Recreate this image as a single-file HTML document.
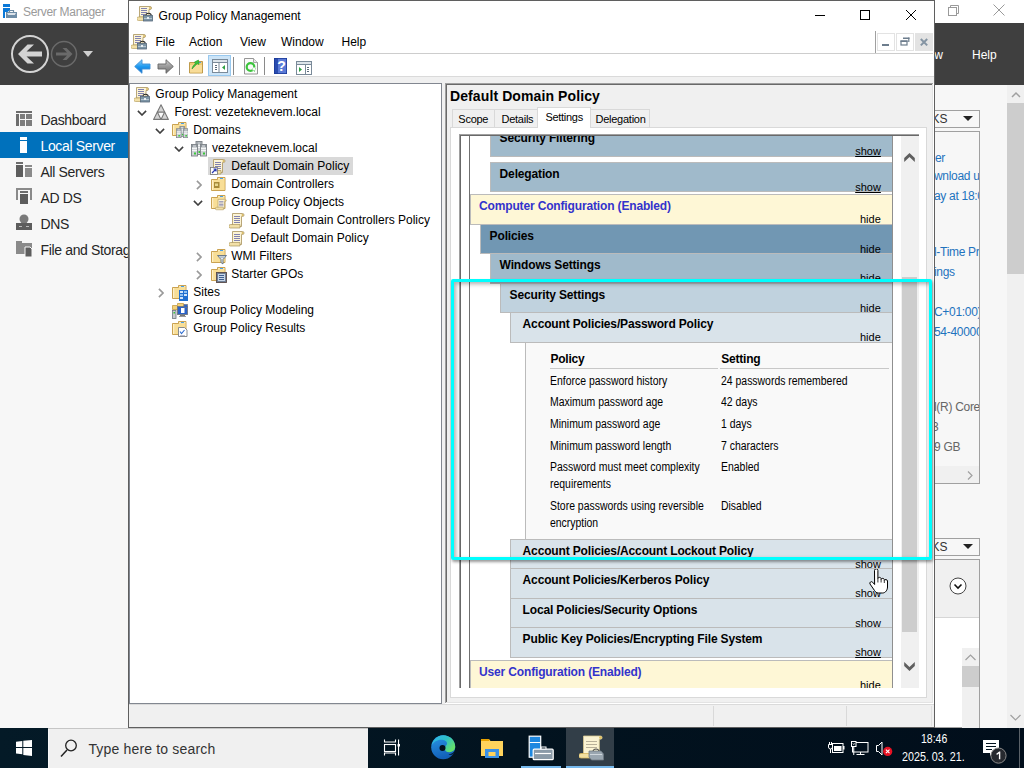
<!DOCTYPE html><html><head><meta charset="utf-8"><style>html,body{margin:0;padding:0;width:1024px;height:768px;overflow:hidden;position:relative;font-family:"Liberation Sans", sans-serif;background:#fff}div,svg{position:absolute}</style></head><body><div style="position:absolute;left:0px;top:0px;width:1024px;height:23px;background:#ffffff;"></div><svg style="position:absolute;left:0px;top:0px;" width="20" height="20" viewBox="0 0 20 20"><rect x="3" y="4" width="7" height="3" fill="#0a78d7"/><path d="M3 8 h7 v2 l-2.5 2 h-2.5 v6 h-2 Z" fill="#0a78d7"/><rect x="6" y="12" width="11" height="6" fill="#6f8da6"/><path d="M9.5 12 v-1.5 h4 v1.5" fill="none" stroke="#6f8da6" stroke-width="1.2"/><path d="M7 13.2 h9 l-1.2 1.6 h-6.6 Z" fill="#fff"/></svg><div style="position:absolute;left:23px;top:6.00px;font-size:12px;line-height:12px;color:#9a9a9a;font-weight:normal;white-space:nowrap;letter-spacing:-0.3px;">Server Manager</div><svg style="position:absolute;left:946px;top:3px;" width="14" height="14" viewBox="0 0 14 14"><rect x="2.5" y="4.5" width="8" height="8" fill="none" stroke="#9a9a9a"/><path d="M4.5 4.5 v-2 h8 v8 h-2" fill="none" stroke="#9a9a9a"/></svg><svg style="position:absolute;left:993px;top:4px;" width="12" height="12" viewBox="0 0 12 12"><path d="M0.5 0.5 L11.5 11.5 M11.5 0.5 L0.5 11.5" stroke="#9a9a9a" stroke-width="1"/></svg><div style="position:absolute;left:0px;top:23px;width:1024px;height:62px;background:#3f3f3f;"></div><svg style="position:absolute;left:10px;top:34px;" width="40" height="40" viewBox="0 0 40 40"><circle cx="20" cy="20" r="18" fill="none" stroke="#d4d4d4" stroke-width="2"/><path d="M8 20 L17.5 10.5 h6.5 L16.5 17.5 H32 v5 H16.5 L24 29.5 h-6.5 Z" fill="#d4d4d4"/></svg><svg style="position:absolute;left:50px;top:40px;" width="28" height="28" viewBox="0 0 28 28"><circle cx="14" cy="14" r="12.5" fill="none" stroke="#6a6a6a" stroke-width="1.5"/><path d="M22.5 14 L16.5 8 h-4 L17 12.5 H6 v3 H17 L12.5 20 h4 Z" fill="#6a6a6a"/></svg><svg style="position:absolute;left:83px;top:51px;" width="11" height="7" viewBox="0 0 11 7"><path d="M0 0 h10 l-5 6 Z" fill="#cfcfcf"/></svg><div style="position:absolute;left:917px;top:49.00px;font-size:12px;line-height:12px;color:#ffffff;font-weight:normal;white-space:nowrap;">View</div><div style="position:absolute;left:972px;top:49.00px;font-size:12px;line-height:12px;color:#ffffff;font-weight:normal;white-space:nowrap;">Help</div><div style="position:absolute;left:0px;top:85px;width:1024px;height:643px;background:#f7f7f7;"></div><div style="position:absolute;left:0px;top:132px;width:128px;height:26px;background:#0071bc;"></div><div style="position:absolute;left:40.5px;top:113.00px;font-size:14px;line-height:14px;color:#262626;font-weight:normal;white-space:nowrap;letter-spacing:-0.35px;">Dashboard</div><div style="position:absolute;left:40.5px;top:139.00px;font-size:14px;line-height:14px;color:#ffffff;font-weight:normal;white-space:nowrap;letter-spacing:-0.35px;">Local Server</div><div style="position:absolute;left:40.5px;top:165.00px;font-size:14px;line-height:14px;color:#262626;font-weight:normal;white-space:nowrap;letter-spacing:-0.35px;">All Servers</div><div style="position:absolute;left:40.5px;top:191.00px;font-size:14px;line-height:14px;color:#262626;font-weight:normal;white-space:nowrap;letter-spacing:-0.35px;">AD DS</div><div style="position:absolute;left:40.5px;top:217.00px;font-size:14px;line-height:14px;color:#262626;font-weight:normal;white-space:nowrap;letter-spacing:-0.35px;">DNS</div><div style="position:absolute;left:40.5px;top:243.00px;font-size:14px;line-height:14px;color:#262626;font-weight:normal;white-space:nowrap;letter-spacing:-0.35px;">File and Storage Services</div><svg style="position:absolute;left:16px;top:111px;" width="16" height="16" viewBox="0 0 16 16"><rect x="0" y="0" width="16" height="2" fill="#6d6d6d"/><rect x="0" y="3" width="3" height="12" fill="#6d6d6d"/><rect x="4" y="3" width="5" height="5" fill="#7d7d7d"/><rect x="10" y="3" width="6" height="5" fill="#7d7d7d"/><rect x="4" y="9" width="5" height="6" fill="#7d7d7d"/><rect x="10" y="9" width="6" height="6" fill="#7d7d7d"/></svg><svg style="position:absolute;left:20px;top:137px;" width="8" height="17" viewBox="0 0 8 17"><rect x="0" y="0" width="7" height="3" fill="#fff"/><rect x="0" y="4" width="7" height="12" fill="#fff"/></svg><svg style="position:absolute;left:16px;top:162px;" width="16" height="16" viewBox="0 0 16 16"><rect x="0" y="0" width="7" height="2" fill="#6d6d6d"/><rect x="0" y="3" width="7" height="12" fill="#5d5d5d"/><rect x="9" y="3" width="7" height="2" fill="#8a8a8a"/><rect x="9" y="6" width="7" height="9" fill="#8a8a8a"/></svg><svg style="position:absolute;left:16px;top:188px;" width="16" height="17" viewBox="0 0 16 17"><rect x="0" y="0" width="2" height="12" fill="#8a8a8a"/><rect x="14" y="0" width="2" height="12" fill="#8a8a8a"/><rect x="0" y="0" width="16" height="2" fill="#8a8a8a"/><rect x="4" y="3" width="8" height="2" fill="#6d6d6d"/><rect x="4" y="6" width="8" height="10" fill="#5d5d5d"/></svg><svg style="position:absolute;left:16px;top:214px;" width="16" height="16" viewBox="0 0 16 16"><circle cx="8" cy="5" r="4.5" fill="#7a7a7a"/><rect x="0" y="9" width="16" height="7" fill="#5d5d5d"/><rect x="3" y="12" width="3" height="1" fill="#bbb"/><rect x="10" y="12" width="3" height="1" fill="#bbb"/></svg><svg style="position:absolute;left:16px;top:241px;" width="16" height="16" viewBox="0 0 16 16"><rect x="0" y="0" width="6" height="2" fill="#8a8a8a"/><rect x="0" y="2" width="16" height="11" fill="#8a8a8a"/><path d="M9 6 h5 l2 2 v8 h-7 Z" fill="#5d5d5d" stroke="#f7f7f7" stroke-width="1"/></svg><div style="position:absolute;left:1007px;top:85px;width:17px;height:643px;background:#f0f0f0;"></div><svg style="position:absolute;left:1011px;top:91px;" width="10" height="7" viewBox="0 0 10 7"><path d="M1 6 L5 2 L9 6" fill="none" stroke="#a0a0a0" stroke-width="1.5"/></svg><div style="position:absolute;left:1007px;top:103px;width:17px;height:171px;background:#cdcdcd;"></div><svg style="position:absolute;left:1010px;top:714px;" width="11" height="7" viewBox="0 0 11 7"><path d="M0.5 1 L5.5 6 L10.5 1" fill="none" stroke="#a0a0a0" stroke-width="1.2"/></svg><div style="position:absolute;left:900px;top:110px;width:80px;height:18px;box-sizing:border-box;background:#f7f7f7;border:1px solid #a0a0a0"></div><div style="position:absolute;right:76.5px;top:113.00px;font-size:12px;line-height:12px;color:#333;font-weight:normal;white-space:nowrap;">TASKS</div><svg style="position:absolute;left:963px;top:116px;" width="11" height="6" viewBox="0 0 11 6"><path d="M0 0 h10 l-5 5 Z" fill="#222"/></svg><div style="position:absolute;left:900px;top:131px;width:80px;height:353px;box-sizing:border-box;background:#f7f7f7;border:1px solid #a0a0a0"></div><div style="position:absolute;left:934px;top:131px;width:45px;height:335px;overflow:hidden"><div style="position:absolute;left:1px;top:21px;font-size:12px;line-height:12px;color:#1e73be;white-space:nowrap;letter-spacing:-0.3px">er</div><div style="position:absolute;left:0px;top:39px;font-size:12px;line-height:12px;color:#1e73be;white-space:nowrap;letter-spacing:-0.3px">wnload updates</div><div style="position:absolute;left:0px;top:59px;font-size:12px;line-height:12px;color:#1e73be;white-space:nowrap;letter-spacing:-0.3px">ay at 18:05</div><div style="position:absolute;left:0px;top:115px;font-size:12px;line-height:12px;color:#1e73be;white-space:nowrap;letter-spacing:-0.3px">l-Time Protection</div><div style="position:absolute;left:0px;top:135px;font-size:12px;line-height:12px;color:#1e73be;white-space:nowrap;letter-spacing:-0.3px">ings</div><div style="position:absolute;left:0px;top:175px;font-size:12px;line-height:12px;color:#1e73be;white-space:nowrap;letter-spacing:-0.3px">C+01:00) Budapest</div><div style="position:absolute;left:0px;top:195px;font-size:12px;line-height:12px;color:#1e73be;white-space:nowrap;letter-spacing:-0.3px">54-40000-00000</div><div style="position:absolute;left:0px;top:270px;font-size:12px;line-height:12px;color:#666;white-space:nowrap;letter-spacing:-0.3px">l(R) Core(TM)</div><div style="position:absolute;left:-2px;top:290px;font-size:12px;line-height:12px;color:#666;white-space:nowrap;letter-spacing:-0.3px">3</div><div style="position:absolute;left:0px;top:310px;font-size:12px;line-height:12px;color:#666;white-space:nowrap;letter-spacing:-0.3px">9 GB</div></div><div style="position:absolute;left:900px;top:466px;width:80px;height:18px;box-sizing:border-box;background:#f0f0f0;border-left:0;border-right:1px solid #a0a0a0;border-bottom:1px solid #a0a0a0"></div><svg style="position:absolute;left:967px;top:471px;" width="6" height="9" viewBox="0 0 6 9"><path d="M1 0.5 L5 4.5 L1 8.5" fill="none" stroke="#a0a0a0" stroke-width="1.2"/></svg><div style="position:absolute;left:900px;top:538px;width:80px;height:18px;box-sizing:border-box;background:#f7f7f7;border:1px solid #a0a0a0"></div><div style="position:absolute;right:76.5px;top:541.00px;font-size:12px;line-height:12px;color:#333;font-weight:normal;white-space:nowrap;">TASKS</div><svg style="position:absolute;left:963px;top:544px;" width="11" height="6" viewBox="0 0 11 6"><path d="M0 0 h10 l-5 5 Z" fill="#222"/></svg><div style="position:absolute;left:900px;top:559px;width:80px;height:169px;box-sizing:border-box;background:#fff;border:1px solid #a0a0a0"></div><div style="position:absolute;left:901px;top:560px;width:78px;height:57px;background:#f0f0f0;"></div><div style="position:absolute;left:901px;top:617px;width:78px;height:1px;background:#d6d6d6;"></div><svg style="position:absolute;left:949px;top:577px;" width="18" height="18" viewBox="0 0 18 18"><circle cx="9" cy="9" r="8" fill="#fff" stroke="#444" stroke-width="1"/><path d="M5.5 7.5 L9 11 L12.5 7.5" fill="none" stroke="#111" stroke-width="1.6"/></svg><div style="position:absolute;left:962px;top:648px;width:17px;height:80px;background:#f0f0f0;"></div><svg style="position:absolute;left:965px;top:654px;" width="11" height="7" viewBox="0 0 11 7"><path d="M0.5 6 L5.5 1 L10.5 6" fill="none" stroke="#a0a0a0" stroke-width="1.2"/></svg><div style="position:absolute;left:962px;top:666px;width:17px;height:21px;background:#cdcdcd;"></div><div style="position:absolute;left:128px;top:0px;width:807px;height:728px;box-sizing:border-box;background:#fff;border:1px solid #5f5f5f"></div><svg style="position:absolute;left:137px;top:6px;" width="16" height="16" viewBox="0 0 16 16"><path d="M2.5 0.5 h10.5 a1.5 1.5 0 0 1 0 3 h-1 v7.5 h-9.5 Z" fill="#fcf4d6" stroke="#a8925a" stroke-width="0.8"/><circle cx="13" cy="2" r="1" fill="#d8b860"/><rect x="4" y="2" width="6" height="1" fill="#8282b0"/><rect x="4" y="4" width="6" height="1" fill="#8282b0"/><rect x="4" y="6" width="6" height="1" fill="#8282b0"/><rect x="4" y="8" width="4" height="1" fill="#8282b0"/><path d="M1.5 11 h7 v3.5 h-7 a1.75 1.75 0 0 1 0 -3.5Z" fill="#f2e0a8" stroke="#b8a060" stroke-width="0.7"/><path d="M8.8 9.5 a2.7 2.2 0 0 1 5.4 0" fill="none" stroke="#2a2a2a" stroke-width="1.1"/><rect x="6.5" y="9.5" width="9" height="5.5" fill="#7d95a6" stroke="#55687a" stroke-width="0.8"/><rect x="7" y="12" width="8" height="1" fill="#b4c4d0"/><rect x="10" y="11" width="2" height="2" fill="#e8eef2"/></svg><div style="position:absolute;left:158.6px;top:10.00px;font-size:12px;line-height:12px;color:#000;font-weight:normal;white-space:nowrap;">Group Policy Management</div><div style="position:absolute;left:815px;top:15px;width:10px;height:1px;background:#000;"></div><div style="position:absolute;left:860px;top:10px;width:10px;height:10px;box-sizing:border-box;border:1px solid #000"></div><svg style="position:absolute;left:905px;top:9px;" width="12" height="12" viewBox="0 0 12 12"><path d="M1 1 L11 11 M11 1 L1 11" stroke="#000" stroke-width="1"/></svg><svg style="position:absolute;left:131px;top:34px;" width="16" height="16" viewBox="0 0 16 16"><path d="M2.5 0.5 h10.5 a1.5 1.5 0 0 1 0 3 h-1 v7.5 h-9.5 Z" fill="#fcf4d6" stroke="#a8925a" stroke-width="0.8"/><circle cx="13" cy="2" r="1" fill="#d8b860"/><rect x="4" y="2" width="6" height="1" fill="#8282b0"/><rect x="4" y="4" width="6" height="1" fill="#8282b0"/><rect x="4" y="6" width="6" height="1" fill="#8282b0"/><rect x="4" y="8" width="4" height="1" fill="#8282b0"/><path d="M1.5 11 h7 v3.5 h-7 a1.75 1.75 0 0 1 0 -3.5Z" fill="#f2e0a8" stroke="#b8a060" stroke-width="0.7"/><path d="M8.8 9.5 a2.7 2.2 0 0 1 5.4 0" fill="none" stroke="#2a2a2a" stroke-width="1.1"/><rect x="6.5" y="9.5" width="9" height="5.5" fill="#7d95a6" stroke="#55687a" stroke-width="0.8"/><rect x="7" y="12" width="8" height="1" fill="#b4c4d0"/><rect x="10" y="11" width="2" height="2" fill="#e8eef2"/></svg><div style="position:absolute;left:155.5px;top:36.00px;font-size:12px;line-height:12px;color:#000;font-weight:normal;white-space:nowrap;">File</div><div style="position:absolute;left:189px;top:36.00px;font-size:12px;line-height:12px;color:#000;font-weight:normal;white-space:nowrap;">Action</div><div style="position:absolute;left:240px;top:36.00px;font-size:12px;line-height:12px;color:#000;font-weight:normal;white-space:nowrap;">View</div><div style="position:absolute;left:281px;top:36.00px;font-size:12px;line-height:12px;color:#000;font-weight:normal;white-space:nowrap;">Window</div><div style="position:absolute;left:341.5px;top:36.00px;font-size:12px;line-height:12px;color:#000;font-weight:normal;white-space:nowrap;">Help</div><div style="position:absolute;left:875px;top:31px;width:1px;height:22px;background:#a0a0a0;"></div><div style="position:absolute;left:877px;top:33px;width:18px;height:18px;box-sizing:border-box;border:1px solid #e3e3e3;background:#fff"></div><div style="position:absolute;left:882px;top:44px;width:7px;height:2px;background:#6d7d8d;"></div><div style="position:absolute;left:896px;top:33px;width:18px;height:18px;box-sizing:border-box;border:1px solid #e3e3e3;background:#fff"></div><svg style="position:absolute;left:900px;top:37px;" width="10" height="9" viewBox="0 0 10 9"><rect x="1" y="4" width="6" height="4" fill="none" stroke="#6d7d8d" stroke-width="1.2"/><rect x="0.5" y="3.5" width="7" height="1.5" fill="#6d7d8d"/><rect x="3" y="0.5" width="6.5" height="1.5" fill="#6d7d8d"/><rect x="8.2" y="0.5" width="1.2" height="4.5" fill="#6d7d8d"/></svg><div style="position:absolute;left:915px;top:33px;width:18px;height:18px;background:#e3e3e3;"></div><svg style="position:absolute;left:919px;top:37px;" width="10" height="10" viewBox="0 0 10 10"><path d="M1.8 2 L8.2 8.4 M8.2 2 L1.8 8.4" stroke="#8494a3" stroke-width="2"/></svg><div style="position:absolute;left:129px;top:53px;width:804px;height:1px;background:#cdcdcd;"></div><svg style="position:absolute;left:134px;top:59px;" width="17" height="15" viewBox="0 0 17 15"><defs><linearGradient id="bk" x1="0" y1="0" x2="0" y2="1"><stop offset="0" stop-color="#8fd0fa"/><stop offset="0.5" stop-color="#1e9af0"/><stop offset="1" stop-color="#0a66c8"/></linearGradient></defs><path d="M0.7 7.5 L8 0.7 v4.3 h8 v5 h-8 v4.3 Z" fill="url(#bk)" stroke="#3c8fd6" stroke-width="0.9" stroke-linejoin="round"/></svg><svg style="position:absolute;left:157px;top:59px;" width="17" height="15" viewBox="0 0 17 15"><defs><linearGradient id="fw" x1="0" y1="0" x2="0" y2="1"><stop offset="0" stop-color="#d0d0d0"/><stop offset="0.5" stop-color="#9a9a9a"/><stop offset="1" stop-color="#6e6e6e"/></linearGradient></defs><path d="M16.3 7.5 L9 0.7 v4.3 h-8 v5 h8 v4.3 Z" fill="url(#fw)" stroke="#646464" stroke-width="0.9" stroke-linejoin="round"/></svg><div style="position:absolute;left:179px;top:57px;width:1px;height:18px;background:#8a8a8a;"></div><svg style="position:absolute;left:188px;top:58px;" width="16" height="17" viewBox="0 0 16 17"><path d="M1.5 4.5 h6 l1 -1 h6 v11.5 h-13 Z" fill="#f0cd78" stroke="#b8923e" stroke-width="0.9"/><rect x="2" y="7" width="12" height="7.5" fill="#f8dc98"/><rect x="10" y="4" width="3" height="1" fill="#4aa0e8"/><path d="M4 11 C4.5 8 6 6.5 7.5 6 L6.5 4 L10.5 2 L11 6.5 L9.5 5.8 C8 6.5 6.5 8.5 4 11 Z" fill="#3cc43c" stroke="#2a9a2a" stroke-width="0.6"/></svg><div style="position:absolute;left:208px;top:55px;width:23px;height:21px;box-sizing:border-box;background:#cce4f7;border:1px solid #99c9ef"></div><svg style="position:absolute;left:212px;top:59px;" width="16" height="14" viewBox="0 0 16 14"><rect x="0.5" y="0.5" width="15" height="13" fill="#fff" stroke="#7a8a99"/><rect x="0.5" y="0.5" width="15" height="3" fill="#dde4ea" stroke="#7a8a99"/><rect x="3" y="6" width="2" height="1" fill="#5a6a7a"/><rect x="3" y="8" width="2" height="1" fill="#5a6a7a"/><rect x="3" y="10" width="2" height="1" fill="#5a6a7a"/><rect x="6.5" y="4" width="1" height="9" fill="#7a8a99"/><path d="M13 6 L10 8.5 L13 11 Z" fill="#2ea043"/></svg><div style="position:absolute;left:233px;top:57px;width:1px;height:18px;background:#8a8a8a;"></div><svg style="position:absolute;left:244px;top:58px;" width="14" height="17" viewBox="0 0 14 17"><path d="M0.5 0.5 h9 l4 4 v11.5 h-13 Z" fill="#fafafa" stroke="#8a8a8a" stroke-width="0.9"/><path d="M9.5 0.5 v4 h4" fill="#e8e8e8" stroke="#8a8a8a" stroke-width="0.7"/><circle cx="6.5" cy="9" r="3.8" fill="none" stroke="#3cc43c" stroke-width="2.2"/><path d="M8 10.5 L12 10 L10.5 14 Z" fill="#3cc43c"/><rect x="8.5" y="9.5" width="3" height="3" fill="#fafafa"/></svg><div style="position:absolute;left:264px;top:57px;width:1px;height:18px;background:#8a8a8a;"></div><svg style="position:absolute;left:274px;top:58px;" width="13" height="16" viewBox="0 0 13 16"><rect x="0" y="0" width="13" height="16" fill="#1b3a98"/><rect x="4" y="0.8" width="8.2" height="14.4" fill="#5a7ad6"/><rect x="0.8" y="0.8" width="3.2" height="14.4" fill="#2a4cb0"/><text x="7.5" y="13" font-size="14" font-family="Liberation Sans" font-weight="bold" fill="#fff" text-anchor="middle">?</text></svg><svg style="position:absolute;left:296px;top:61px;" width="16" height="14" viewBox="0 0 16 14"><rect x="0.5" y="0.5" width="15" height="13" fill="#fff" stroke="#7a8a99"/><rect x="0.5" y="0.5" width="15" height="3" fill="#dde4ea" stroke="#7a8a99"/><rect x="11" y="6" width="2" height="1" fill="#5a6a7a"/><rect x="11" y="8" width="2" height="1" fill="#5a6a7a"/><rect x="11" y="10" width="2" height="1" fill="#5a6a7a"/><rect x="9" y="4" width="1" height="9" fill="#7a8a99"/><path d="M3 6 L6 8.5 L3 11 Z" fill="#2ea043"/></svg><div style="position:absolute;left:129px;top:76px;width:805px;height:1px;background:#dadada;"></div><div style="position:absolute;left:129px;top:77px;width:805px;height:650px;background:#f0f0f0;"></div><div style="position:absolute;left:129px;top:83px;width:313px;height:621px;box-sizing:border-box;background:#fff;border:1px solid #828790"></div><div style="position:absolute;left:445px;top:83px;width:489px;height:621px;background:#ffffff;"></div><div style="position:absolute;left:445px;top:83px;width:488px;height:620px;background:#a0a0a0;"></div><div style="position:absolute;left:446px;top:84px;width:487px;height:619px;background:#e3e3e3;"></div><div style="position:absolute;left:446px;top:84px;width:486px;height:618px;background:#696969;"></div><div style="position:absolute;left:447px;top:85px;width:485px;height:617px;background:#f0f0f0;"></div><div style="position:absolute;left:129px;top:704px;width:805px;height:1px;background:#dadada;"></div><div style="position:absolute;left:713px;top:706px;width:1px;height:20px;background:#d9d9d9;"></div><div style="position:absolute;left:846px;top:706px;width:1px;height:20px;background:#d9d9d9;"></div><div style="position:absolute;left:931px;top:706px;width:1px;height:20px;background:#e0e0e0;"></div><div style="position:absolute;left:208px;top:157px;width:145px;height:18px;background:#d9d9d9;"></div><svg style="position:absolute;left:134px;top:87px;" width="16" height="16" viewBox="0 0 16 16"><path d="M2.5 0.5 h10.5 a1.5 1.5 0 0 1 0 3 h-1 v7.5 h-9.5 Z" fill="#fcf4d6" stroke="#a8925a" stroke-width="0.8"/><circle cx="13" cy="2" r="1" fill="#d8b860"/><rect x="4" y="2" width="6" height="1" fill="#8282b0"/><rect x="4" y="4" width="6" height="1" fill="#8282b0"/><rect x="4" y="6" width="6" height="1" fill="#8282b0"/><rect x="4" y="8" width="4" height="1" fill="#8282b0"/><path d="M1.5 11 h7 v3.5 h-7 a1.75 1.75 0 0 1 0 -3.5Z" fill="#f2e0a8" stroke="#b8a060" stroke-width="0.7"/><path d="M8.8 9.5 a2.7 2.2 0 0 1 5.4 0" fill="none" stroke="#2a2a2a" stroke-width="1.1"/><rect x="6.5" y="9.5" width="9" height="5.5" fill="#7d95a6" stroke="#55687a" stroke-width="0.8"/><rect x="7" y="12" width="8" height="1" fill="#b4c4d0"/><rect x="10" y="11" width="2" height="2" fill="#e8eef2"/></svg><div style="position:absolute;left:155.3px;top:88.00px;font-size:12px;line-height:12px;color:#000;font-weight:normal;white-space:nowrap;">Group Policy Management</div><svg style="position:absolute;left:136.5px;top:110px;" width="10" height="6" viewBox="0 0 10 6"><path d="M0.9 0.9 L5 5 L9.1 0.9" fill="none" stroke="#404040" stroke-width="1.6"/></svg><svg style="position:absolute;left:153px;top:104px;" width="16" height="16" viewBox="0 0 16 16"><path d="M8 0.8 L15.4 15.4 H0.6 Z" fill="#d4d4d4" stroke="#777" stroke-width="1.1" stroke-linejoin="round"/><path d="M4.3 8.1 H11.7 L8 15.4 Z" fill="#fafafa" stroke="#777" stroke-width="1.1" stroke-linejoin="round"/></svg><div style="position:absolute;left:174.5px;top:106.00px;font-size:12px;line-height:12px;color:#000;font-weight:normal;white-space:nowrap;">Forest: vezeteknevem.local</div><svg style="position:absolute;left:155px;top:128px;" width="10" height="6" viewBox="0 0 10 6"><path d="M0.9 0.9 L5 5 L9.1 0.9" fill="none" stroke="#404040" stroke-width="1.6"/></svg><svg style="position:absolute;left:172px;top:122px;" width="16" height="16" viewBox="0 0 16 16"><path d="M0.5 2.5 h6 v-2 h7.5 v13 h-13.5 Z" fill="#f3d17a" stroke="#c49a45" stroke-width="0.9"/><rect x="7" y="1" width="6.5" height="1.6" fill="#fbeab8"/><rect x="9" y="1" width="3" height="1" fill="#4aa0e8"/><rect x="1" y="3" width="12.5" height="10" fill="#f8de96"/><rect x="1" y="3" width="1.2" height="10" fill="#fff0c8"/><g transform="translate(4,4) scale(0.78)"><rect x="5.0" y="0.5" width="6" height="13" fill="#cfd3d6" stroke="#7a8086" stroke-width="0.9"/><rect x="5.5" y="1" width="5" height="2" fill="#8e959b"/><rect x="6.5" y="1.5" width="3" height="1" fill="#e8ecef"/><rect x="5.5" y="4" width="5" height="1" fill="#f4f6f7"/><rect x="5.5" y="6" width="5" height="1" fill="#f4f6f7"/><rect x="7.5" y="10" width="2" height="2" fill="#38c838"/><rect x="0.5" y="3.5" width="6" height="11.5" fill="#cfd3d6" stroke="#7a8086" stroke-width="0.9"/><rect x="1" y="4" width="5" height="2" fill="#8e959b"/><rect x="2" y="4.5" width="3" height="1" fill="#e8ecef"/><rect x="1" y="7" width="5" height="1" fill="#f4f6f7"/><rect x="1" y="9" width="5" height="1" fill="#f4f6f7"/><rect x="3" y="11.5" width="2" height="2" fill="#38c838"/><rect x="9.5" y="3.5" width="6" height="11.5" fill="#cfd3d6" stroke="#7a8086" stroke-width="0.9"/><rect x="10" y="4" width="5" height="2" fill="#8e959b"/><rect x="11" y="4.5" width="3" height="1" fill="#e8ecef"/><rect x="10" y="7" width="5" height="1" fill="#f4f6f7"/><rect x="10" y="9" width="5" height="1" fill="#f4f6f7"/><rect x="12" y="11.5" width="2" height="2" fill="#38c838"/></g></svg><div style="position:absolute;left:193.3px;top:124.00px;font-size:12px;line-height:12px;color:#000;font-weight:normal;white-space:nowrap;">Domains</div><svg style="position:absolute;left:174px;top:146px;" width="10" height="6" viewBox="0 0 10 6"><path d="M0.9 0.9 L5 5 L9.1 0.9" fill="none" stroke="#404040" stroke-width="1.6"/></svg><svg style="position:absolute;left:191px;top:141px;" width="16" height="16" viewBox="0 0 16 16"><rect x="5.0" y="0.5" width="6" height="13" fill="#cfd3d6" stroke="#7a8086" stroke-width="0.9"/><rect x="5.5" y="1" width="5" height="2" fill="#8e959b"/><rect x="6.5" y="1.5" width="3" height="1" fill="#e8ecef"/><rect x="5.5" y="4" width="5" height="1" fill="#f4f6f7"/><rect x="5.5" y="6" width="5" height="1" fill="#f4f6f7"/><rect x="7.5" y="10" width="2" height="2" fill="#38c838"/><rect x="0.5" y="3.5" width="6" height="11.5" fill="#cfd3d6" stroke="#7a8086" stroke-width="0.9"/><rect x="1" y="4" width="5" height="2" fill="#8e959b"/><rect x="2" y="4.5" width="3" height="1" fill="#e8ecef"/><rect x="1" y="7" width="5" height="1" fill="#f4f6f7"/><rect x="1" y="9" width="5" height="1" fill="#f4f6f7"/><rect x="3" y="11.5" width="2" height="2" fill="#38c838"/><rect x="9.5" y="3.5" width="6" height="11.5" fill="#cfd3d6" stroke="#7a8086" stroke-width="0.9"/><rect x="10" y="4" width="5" height="2" fill="#8e959b"/><rect x="11" y="4.5" width="3" height="1" fill="#e8ecef"/><rect x="10" y="7" width="5" height="1" fill="#f4f6f7"/><rect x="10" y="9" width="5" height="1" fill="#f4f6f7"/><rect x="12" y="11.5" width="2" height="2" fill="#38c838"/></svg><div style="position:absolute;left:212px;top:142.00px;font-size:12px;line-height:12px;color:#000;font-weight:normal;white-space:nowrap;">vezeteknevem.local</div><svg style="position:absolute;left:210px;top:159px;" width="16" height="16" viewBox="0 0 16 16"><path d="M3.5 0.5 h10 a1.5 1.5 0 0 1 0 3 h-1 v10 h-9 Z" fill="#fcf4d6" stroke="#a8925a" stroke-width="0.8"/><circle cx="13.5" cy="2" r="1" fill="#d8b860"/><rect x="5" y="3" width="6" height="1" fill="#8282b0"/><rect x="5" y="5" width="6" height="1" fill="#8282b0"/><rect x="5" y="7" width="6" height="1" fill="#8282b0"/><rect x="5" y="9" width="6" height="1" fill="#8282b0"/><path d="M1.5 11.5 h9.5 v3.5 h-9.5 a1.75 1.75 0 0 1 0 -3.5Z" fill="#f2e0a8" stroke="#a8925a" stroke-width="0.7"/><rect x="0.5" y="8.5" width="7" height="7" fill="#fff" stroke="#777" stroke-width="0.8"/><path d="M2 14 L6 10 M3.5 10 h2.5 v2.5" stroke="#2a3ab0" stroke-width="1.2" fill="none"/></svg><div style="position:absolute;left:231.3px;top:160.00px;font-size:12px;line-height:12px;color:#000;font-weight:normal;white-space:nowrap;">Default Domain Policy</div><svg style="position:absolute;left:195.5px;top:180px;" width="6" height="10" viewBox="0 0 6 10"><path d="M0.9 0.9 L5 5 L0.9 9.1" fill="none" stroke="#9a9a9a" stroke-width="1.6"/></svg><svg style="position:absolute;left:211px;top:177px;" width="16" height="16" viewBox="0 0 16 16"><path d="M0.5 2.5 h6 v-2 h7.5 v13 h-13.5 Z" fill="#f3d17a" stroke="#c49a45" stroke-width="0.9"/><rect x="7" y="1" width="6.5" height="1.6" fill="#fbeab8"/><rect x="9" y="1" width="3" height="1" fill="#4aa0e8"/><rect x="1" y="3" width="12.5" height="10" fill="#f8de96"/><rect x="1" y="3" width="1.2" height="10" fill="#fff0c8"/><rect x="3" y="5" width="5.5" height="6" fill="#a88a3a"/><rect x="4" y="6.5" width="3" height="2.5" fill="#e8d890"/></svg><div style="position:absolute;left:231.3px;top:178.00px;font-size:12px;line-height:12px;color:#000;font-weight:normal;white-space:nowrap;">Domain Controllers</div><svg style="position:absolute;left:193px;top:200px;" width="10" height="6" viewBox="0 0 10 6"><path d="M0.9 0.9 L5 5 L9.1 0.9" fill="none" stroke="#404040" stroke-width="1.6"/></svg><svg style="position:absolute;left:211px;top:195px;" width="16" height="16" viewBox="0 0 16 16"><path d="M0.5 2.5 h6 v-2 h7.5 v13 h-13.5 Z" fill="#f3d17a" stroke="#c49a45" stroke-width="0.9"/><rect x="7" y="1" width="6.5" height="1.6" fill="#fbeab8"/><rect x="9" y="1" width="3" height="1" fill="#4aa0e8"/><rect x="1" y="3" width="12.5" height="10" fill="#f8de96"/><rect x="1" y="3" width="1.2" height="10" fill="#fff0c8"/><g transform="translate(4.5,4) scale(0.72)"><path d="M3.5 0.5 h10 a1.5 1.5 0 0 1 0 3 h-1 v10 h-9 Z" fill="#fcf4d6" stroke="#a8925a" stroke-width="0.8"/><circle cx="13.5" cy="2" r="1" fill="#d8b860"/><rect x="5" y="3" width="6" height="1" fill="#8282b0"/><rect x="5" y="5" width="6" height="1" fill="#8282b0"/><rect x="5" y="7" width="6" height="1" fill="#8282b0"/><rect x="5" y="9" width="6" height="1" fill="#8282b0"/><path d="M1.5 11.5 h9.5 v3.5 h-9.5 a1.75 1.75 0 0 1 0 -3.5Z" fill="#f2e0a8" stroke="#a8925a" stroke-width="0.7"/></g></svg><div style="position:absolute;left:231.3px;top:196.00px;font-size:12px;line-height:12px;color:#000;font-weight:normal;white-space:nowrap;">Group Policy Objects</div><svg style="position:absolute;left:229px;top:213px;" width="16" height="16" viewBox="0 0 16 16"><path d="M3.5 0.5 h10 a1.5 1.5 0 0 1 0 3 h-1 v10 h-9 Z" fill="#fcf4d6" stroke="#a8925a" stroke-width="0.8"/><circle cx="13.5" cy="2" r="1" fill="#d8b860"/><rect x="5" y="3" width="6" height="1" fill="#8282b0"/><rect x="5" y="5" width="6" height="1" fill="#8282b0"/><rect x="5" y="7" width="6" height="1" fill="#8282b0"/><rect x="5" y="9" width="6" height="1" fill="#8282b0"/><path d="M1.5 11.5 h9.5 v3.5 h-9.5 a1.75 1.75 0 0 1 0 -3.5Z" fill="#f2e0a8" stroke="#a8925a" stroke-width="0.7"/></svg><div style="position:absolute;left:250.6px;top:214.00px;font-size:12px;line-height:12px;color:#000;font-weight:normal;white-space:nowrap;">Default Domain Controllers Policy</div><svg style="position:absolute;left:229px;top:231px;" width="16" height="16" viewBox="0 0 16 16"><path d="M3.5 0.5 h10 a1.5 1.5 0 0 1 0 3 h-1 v10 h-9 Z" fill="#fcf4d6" stroke="#a8925a" stroke-width="0.8"/><circle cx="13.5" cy="2" r="1" fill="#d8b860"/><rect x="5" y="3" width="6" height="1" fill="#8282b0"/><rect x="5" y="5" width="6" height="1" fill="#8282b0"/><rect x="5" y="7" width="6" height="1" fill="#8282b0"/><rect x="5" y="9" width="6" height="1" fill="#8282b0"/><path d="M1.5 11.5 h9.5 v3.5 h-9.5 a1.75 1.75 0 0 1 0 -3.5Z" fill="#f2e0a8" stroke="#a8925a" stroke-width="0.7"/></svg><div style="position:absolute;left:250.6px;top:232.00px;font-size:12px;line-height:12px;color:#000;font-weight:normal;white-space:nowrap;">Default Domain Policy</div><svg style="position:absolute;left:195.5px;top:252px;" width="6" height="10" viewBox="0 0 6 10"><path d="M0.9 0.9 L5 5 L0.9 9.1" fill="none" stroke="#9a9a9a" stroke-width="1.6"/></svg><svg style="position:absolute;left:211px;top:249px;" width="16" height="16" viewBox="0 0 16 16"><path d="M0.5 2.5 h6 v-2 h7.5 v13 h-13.5 Z" fill="#f3d17a" stroke="#c49a45" stroke-width="0.9"/><rect x="7" y="1" width="6.5" height="1.6" fill="#fbeab8"/><rect x="9" y="1" width="3" height="1" fill="#4aa0e8"/><rect x="1" y="3" width="12.5" height="10" fill="#f8de96"/><rect x="1" y="3" width="1.2" height="10" fill="#fff0c8"/><path d="M6.5 6.5 h9 l-3.5 4 v4.5 l-2 -1.5 v-3 Z" fill="#e4e8ec" stroke="#5d6f80" stroke-width="0.9"/><rect x="8" y="7.5" width="6" height="1.2" fill="#9fb0c0"/></svg><div style="position:absolute;left:231.3px;top:250.00px;font-size:12px;line-height:12px;color:#000;font-weight:normal;white-space:nowrap;">WMI Filters</div><svg style="position:absolute;left:195.5px;top:270px;" width="6" height="10" viewBox="0 0 6 10"><path d="M0.9 0.9 L5 5 L0.9 9.1" fill="none" stroke="#9a9a9a" stroke-width="1.6"/></svg><svg style="position:absolute;left:211px;top:267px;" width="16" height="16" viewBox="0 0 16 16"><path d="M0.5 2.5 h6 v-2 h7.5 v13 h-13.5 Z" fill="#f3d17a" stroke="#c49a45" stroke-width="0.9"/><rect x="7" y="1" width="6.5" height="1.6" fill="#fbeab8"/><rect x="9" y="1" width="3" height="1" fill="#4aa0e8"/><rect x="1" y="3" width="12.5" height="10" fill="#f8de96"/><rect x="1" y="3" width="1.2" height="10" fill="#fff0c8"/><rect x="5.5" y="5.5" width="10" height="10" fill="#6f7f95" stroke="#5a4a48" stroke-width="0.9"/><rect x="7" y="7" width="7" height="7" fill="#c8d6e8"/><rect x="8" y="8" width="5" height="1" fill="#3f5f8f"/><rect x="8" y="10" width="5" height="1" fill="#3f5f8f"/><rect x="8" y="12" width="5" height="1" fill="#3f5f8f"/></svg><div style="position:absolute;left:231.3px;top:268.00px;font-size:12px;line-height:12px;color:#000;font-weight:normal;white-space:nowrap;">Starter GPOs</div><svg style="position:absolute;left:158px;top:288px;" width="6" height="10" viewBox="0 0 6 10"><path d="M0.9 0.9 L5 5 L0.9 9.1" fill="none" stroke="#9a9a9a" stroke-width="1.6"/></svg><svg style="position:absolute;left:172px;top:285px;" width="16" height="16" viewBox="0 0 16 16"><path d="M0.5 2.5 h6 v-2 h7.5 v13 h-13.5 Z" fill="#f3d17a" stroke="#c49a45" stroke-width="0.9"/><rect x="7" y="1" width="6.5" height="1.6" fill="#fbeab8"/><rect x="9" y="1" width="3" height="1" fill="#4aa0e8"/><rect x="1" y="3" width="12.5" height="10" fill="#f8de96"/><rect x="1" y="3" width="1.2" height="10" fill="#fff0c8"/><rect x="7" y="5" width="9" height="11" fill="#1f6fd0"/><rect x="8" y="6" width="3" height="2" fill="#cfe4fa"/><rect x="12" y="6" width="3" height="2" fill="#8fc0f0"/><rect x="8" y="9" width="3" height="2" fill="#8fc0f0"/><rect x="12" y="9" width="3" height="2" fill="#cfe4fa"/><rect x="8" y="12" width="3" height="2" fill="#cfe4fa"/></svg><div style="position:absolute;left:193.3px;top:286.00px;font-size:12px;line-height:12px;color:#000;font-weight:normal;white-space:nowrap;">Sites</div><svg style="position:absolute;left:172px;top:303px;" width="16" height="16" viewBox="0 0 16 16"><path d="M0.5 2.5 h5 v-2 h6 v6 h-11 Z" fill="#f3d17a" stroke="#c49a45" stroke-width="0.8"/><rect x="5.5" y="3.5" width="10" height="8" fill="#2a62c8" stroke="#6f7680" stroke-width="0.9"/><rect x="9" y="5" width="3.5" height="5" fill="#fff"/><rect x="12" y="1.5" width="3.5" height="3" fill="#2a62c8" stroke="#6f7680" stroke-width="0.7"/><rect x="8" y="12" width="5" height="1" fill="#777"/><rect x="7" y="13" width="7" height="1" fill="#999"/><rect x="0.5" y="7.5" width="3.5" height="8" fill="#c8ccd0" stroke="#6f7680" stroke-width="0.8"/><rect x="1.5" y="9" width="1.5" height="1.5" fill="#38c838"/></svg><div style="position:absolute;left:193.3px;top:304.00px;font-size:12px;line-height:12px;color:#000;font-weight:normal;white-space:nowrap;">Group Policy Modeling</div><svg style="position:absolute;left:172px;top:321px;" width="16" height="16" viewBox="0 0 16 16"><path d="M0.5 2.5 h6 v-2 h7.5 v13 h-13.5 Z" fill="#f3d17a" stroke="#c49a45" stroke-width="0.9"/><rect x="7" y="1" width="6.5" height="1.6" fill="#fbeab8"/><rect x="9" y="1" width="3" height="1" fill="#4aa0e8"/><rect x="1" y="3" width="12.5" height="10" fill="#f8de96"/><rect x="1" y="3" width="1.2" height="10" fill="#fff0c8"/><path d="M6.5 6.5 h6 l2.5 2.5 v6.5 h-8.5 Z" fill="#fff" stroke="#7a7f86" stroke-width="0.9"/><path d="M8 10.5 l1.5 2 l3 -3.5" stroke="#2a6ad0" stroke-width="1.1" fill="none"/><rect x="8" y="14" width="5" height="0.8" fill="#aab"/></svg><div style="position:absolute;left:193.3px;top:322.00px;font-size:12px;line-height:12px;color:#000;font-weight:normal;white-space:nowrap;">Group Policy Results</div><div style="position:absolute;left:450px;top:89.00px;font-size:14px;line-height:14px;color:#000;font-weight:bold;white-space:nowrap;letter-spacing:0.1px;">Default Domain Policy</div><div style="position:absolute;left:452px;top:109px;width:43px;height:19px;box-sizing:border-box;background:#f0f0f0;border:1px solid #d9d9d9;border-bottom:0"></div><div style="position:absolute;left:458.3px;top:114.00px;font-size:11px;line-height:11px;color:#000;font-weight:normal;white-space:nowrap;letter-spacing:-0.25px;">Scope</div><div style="position:absolute;left:494px;top:109px;width:44px;height:19px;box-sizing:border-box;background:#f0f0f0;border:1px solid #d9d9d9;border-bottom:0"></div><div style="position:absolute;left:501.5px;top:114.00px;font-size:11px;line-height:11px;color:#000;font-weight:normal;white-space:nowrap;letter-spacing:-0.25px;">Details</div><div style="position:absolute;left:590px;top:109px;width:60px;height:19px;box-sizing:border-box;background:#f0f0f0;border:1px solid #d9d9d9;border-bottom:0"></div><div style="position:absolute;left:595.5px;top:114.00px;font-size:11px;line-height:11px;color:#000;font-weight:normal;white-space:nowrap;letter-spacing:-0.25px;">Delegation</div><div style="position:absolute;left:450px;top:127px;width:477px;height:571px;box-sizing:border-box;background:#fff;border:1px solid #d9d9d9"></div><div style="position:absolute;left:537px;top:107px;width:54px;height:21px;box-sizing:border-box;background:#fff;border:1px solid #d9d9d9;border-bottom:0"></div><div style="position:absolute;left:545.5px;top:112.00px;font-size:11px;line-height:11px;color:#000;font-weight:normal;white-space:nowrap;letter-spacing:-0.3px;">Settings</div><div style="position:absolute;left:459px;top:134px;width:460px;height:554px;overflow:hidden;background:#fff"><div style="position:absolute;left:31px;top:-7px;width:402px;height:30px;background:#A0BACB;"></div><div style="position:absolute;left:31px;top:22px;width:402px;height:1px;background:#bbbbbb;"></div><div style="position:absolute;left:31px;top:-7px;width:1px;height:30px;background:#bbbbbb;"></div><div style="position:absolute;left:40.60000000000002px;top:-2px;font-size:12px;line-height:12px;color:#000;font-weight:bold;white-space:nowrap;letter-spacing:-0.15px;">Security Filtering</div><div style="position:absolute;left:396.20000000000005px;top:12px;font-size:11px;line-height:11px;color:#000;font-weight:normal;white-space:nowrap;text-decoration:underline;">show</div><div style="position:absolute;left:31px;top:28px;width:402px;height:30px;background:#A0BACB;"></div><div style="position:absolute;left:31px;top:28px;width:402px;height:1px;background:#bbbbbb;"></div><div style="position:absolute;left:31px;top:57px;width:402px;height:1px;background:#bbbbbb;"></div><div style="position:absolute;left:31px;top:28px;width:1px;height:30px;background:#bbbbbb;"></div><div style="position:absolute;left:40.60000000000002px;top:34px;font-size:12px;line-height:12px;color:#000;font-weight:bold;white-space:nowrap;letter-spacing:-0.15px;">Delegation</div><div style="position:absolute;left:396.20000000000005px;top:48px;font-size:11px;line-height:11px;color:#000;font-weight:normal;white-space:nowrap;text-decoration:underline;">show</div><div style="position:absolute;left:11px;top:60px;width:422px;height:31px;background:#FEF7D6;"></div><div style="position:absolute;left:11px;top:60px;width:422px;height:1px;background:#bbbbbb;"></div><div style="position:absolute;left:11px;top:90px;width:422px;height:1px;background:#bbbbbb;"></div><div style="position:absolute;left:11px;top:60px;width:1px;height:31px;background:#bbbbbb;"></div><div style="position:absolute;left:20px;top:66px;font-size:12px;line-height:12px;color:#3333cc;font-weight:bold;white-space:nowrap;letter-spacing:-0.15px;">Computer Configuration (Enabled)</div><div style="position:absolute;left:401.0px;top:80px;font-size:11px;line-height:11px;color:#000;font-weight:normal;white-space:nowrap;">hide</div><div style="position:absolute;left:21px;top:91px;width:412px;height:29px;background:#7197B3;"></div><div style="position:absolute;left:21px;top:119px;width:412px;height:1px;background:#bbbbbb;"></div><div style="position:absolute;left:21px;top:91px;width:1px;height:29px;background:#bbbbbb;"></div><div style="position:absolute;left:30.600000000000023px;top:96px;font-size:12px;line-height:12px;color:#000;font-weight:bold;white-space:nowrap;letter-spacing:-0.15px;">Policies</div><div style="position:absolute;left:401.0px;top:110px;font-size:11px;line-height:11px;color:#000;font-weight:normal;white-space:nowrap;">hide</div><div style="position:absolute;left:31px;top:120px;width:402px;height:30px;background:#A0BACB;"></div><div style="position:absolute;left:31px;top:149px;width:402px;height:1px;background:#bbbbbb;"></div><div style="position:absolute;left:31px;top:120px;width:1px;height:30px;background:#bbbbbb;"></div><div style="position:absolute;left:40.60000000000002px;top:125px;font-size:12px;line-height:12px;color:#000;font-weight:bold;white-space:nowrap;letter-spacing:-0.15px;">Windows Settings</div><div style="position:absolute;left:401.0px;top:139px;font-size:11px;line-height:11px;color:#000;font-weight:normal;white-space:nowrap;">hide</div><div style="position:absolute;left:41px;top:150px;width:392px;height:29px;background:#C0D2DE;"></div><div style="position:absolute;left:41px;top:178px;width:392px;height:1px;background:#bbbbbb;"></div><div style="position:absolute;left:41px;top:150px;width:1px;height:29px;background:#bbbbbb;"></div><div style="position:absolute;left:50.60000000000002px;top:155px;font-size:12px;line-height:12px;color:#000;font-weight:bold;white-space:nowrap;letter-spacing:-0.15px;">Security Settings</div><div style="position:absolute;left:401.0px;top:169px;font-size:11px;line-height:11px;color:#000;font-weight:normal;white-space:nowrap;">hide</div><div style="position:absolute;left:51px;top:179px;width:382px;height:30px;background:#D9E3EA;"></div><div style="position:absolute;left:51px;top:208px;width:382px;height:1px;background:#bbbbbb;"></div><div style="position:absolute;left:51px;top:179px;width:1px;height:30px;background:#bbbbbb;"></div><div style="position:absolute;left:63.60000000000002px;top:184px;font-size:12px;line-height:12px;color:#000;font-weight:bold;white-space:nowrap;letter-spacing:-0.15px;">Account Policies/Password Policy</div><div style="position:absolute;left:401.0px;top:198px;font-size:11px;line-height:11px;color:#000;font-weight:normal;white-space:nowrap;">hide</div><div style="position:absolute;left:51px;top:405px;width:382px;height:30px;background:#D9E3EA;"></div><div style="position:absolute;left:51px;top:405px;width:382px;height:1px;background:#bbbbbb;"></div><div style="position:absolute;left:51px;top:434px;width:382px;height:1px;background:#bbbbbb;"></div><div style="position:absolute;left:51px;top:405px;width:1px;height:30px;background:#bbbbbb;"></div><div style="position:absolute;left:63.60000000000002px;top:411px;font-size:12px;line-height:12px;color:#000;font-weight:bold;white-space:nowrap;letter-spacing:-0.15px;">Account Policies/Account Lockout Policy</div><div style="position:absolute;left:396.20000000000005px;top:425px;font-size:11px;line-height:11px;color:#000;font-weight:normal;white-space:nowrap;">show</div><div style="position:absolute;left:51px;top:435px;width:382px;height:30px;background:#D9E3EA;"></div><div style="position:absolute;left:51px;top:464px;width:382px;height:1px;background:#bbbbbb;"></div><div style="position:absolute;left:51px;top:435px;width:1px;height:30px;background:#bbbbbb;"></div><div style="position:absolute;left:63.60000000000002px;top:440px;font-size:12px;line-height:12px;color:#000;font-weight:bold;white-space:nowrap;letter-spacing:-0.15px;">Account Policies/Kerberos Policy</div><div style="position:absolute;left:396.20000000000005px;top:454px;font-size:11px;line-height:11px;color:#000;font-weight:normal;white-space:nowrap;">show</div><div style="position:absolute;left:51px;top:465px;width:382px;height:29px;background:#D9E3EA;"></div><div style="position:absolute;left:51px;top:493px;width:382px;height:1px;background:#bbbbbb;"></div><div style="position:absolute;left:51px;top:465px;width:1px;height:29px;background:#bbbbbb;"></div><div style="position:absolute;left:63.60000000000002px;top:470px;font-size:12px;line-height:12px;color:#000;font-weight:bold;white-space:nowrap;letter-spacing:-0.15px;">Local Policies/Security Options</div><div style="position:absolute;left:396.20000000000005px;top:484px;font-size:11px;line-height:11px;color:#000;font-weight:normal;white-space:nowrap;">show</div><div style="position:absolute;left:51px;top:494px;width:382px;height:30px;background:#D9E3EA;"></div><div style="position:absolute;left:51px;top:523px;width:382px;height:1px;background:#bbbbbb;"></div><div style="position:absolute;left:51px;top:494px;width:1px;height:30px;background:#bbbbbb;"></div><div style="position:absolute;left:63.60000000000002px;top:499px;font-size:12px;line-height:12px;color:#000;font-weight:bold;white-space:nowrap;letter-spacing:-0.15px;">Public Key Policies/Encrypting File System</div><div style="position:absolute;left:396.20000000000005px;top:513px;font-size:11px;line-height:11px;color:#000;font-weight:normal;white-space:nowrap;text-decoration:underline;">show</div><div style="position:absolute;left:11px;top:526px;width:422px;height:41px;background:#FEF7D6;"></div><div style="position:absolute;left:11px;top:526px;width:422px;height:1px;background:#bbbbbb;"></div><div style="position:absolute;left:11px;top:526px;width:1px;height:41px;background:#bbbbbb;"></div><div style="position:absolute;left:20px;top:532px;font-size:12px;line-height:12px;color:#3333cc;font-weight:bold;white-space:nowrap;letter-spacing:-0.15px;">User Configuration (Enabled)</div><div style="position:absolute;left:401.0px;top:546px;font-size:11px;line-height:11px;color:#000;font-weight:normal;white-space:nowrap;">hide</div><div style="position:absolute;left:66px;top:209px;width:367px;height:196px;background:#F9F9F9;"></div><div style="position:absolute;left:66px;top:209px;width:1px;height:196px;background:#bbbbbb;"></div><div style="position:absolute;left:91.39999999999998px;top:219px;font-size:12px;line-height:12px;color:#000;font-weight:bold;white-space:nowrap;letter-spacing:-0.2px;">Policy</div><div style="position:absolute;left:262.20000000000005px;top:219px;font-size:12px;line-height:12px;color:#000;font-weight:bold;white-space:nowrap;letter-spacing:-0.2px;">Setting</div><div style="position:absolute;left:91px;top:234px;width:168px;height:1px;background:#c8c8c8;"></div><div style="position:absolute;left:261px;top:234px;width:169px;height:1px;background:#c8c8c8;"></div><div style="position:absolute;left:91.20000000000005px;top:241px;font-size:12px;line-height:12px;color:#000;font-weight:normal;white-space:nowrap;transform:scaleX(0.87);transform-origin:0 0;">Enforce password history</div><div style="position:absolute;left:262.20000000000005px;top:241px;font-size:12px;line-height:12px;color:#000;font-weight:normal;white-space:nowrap;transform:scaleX(0.87);transform-origin:0 0;">24 passwords remembered</div><div style="position:absolute;left:91.20000000000005px;top:262px;font-size:12px;line-height:12px;color:#000;font-weight:normal;white-space:nowrap;transform:scaleX(0.87);transform-origin:0 0;">Maximum password age</div><div style="position:absolute;left:262.20000000000005px;top:262px;font-size:12px;line-height:12px;color:#000;font-weight:normal;white-space:nowrap;transform:scaleX(0.87);transform-origin:0 0;">42 days</div><div style="position:absolute;left:91.20000000000005px;top:284px;font-size:12px;line-height:12px;color:#000;font-weight:normal;white-space:nowrap;transform:scaleX(0.87);transform-origin:0 0;">Minimum password age</div><div style="position:absolute;left:262.20000000000005px;top:284px;font-size:12px;line-height:12px;color:#000;font-weight:normal;white-space:nowrap;transform:scaleX(0.87);transform-origin:0 0;">1 days</div><div style="position:absolute;left:91.20000000000005px;top:306px;font-size:12px;line-height:12px;color:#000;font-weight:normal;white-space:nowrap;transform:scaleX(0.87);transform-origin:0 0;">Minimum password length</div><div style="position:absolute;left:262.20000000000005px;top:306px;font-size:12px;line-height:12px;color:#000;font-weight:normal;white-space:nowrap;transform:scaleX(0.87);transform-origin:0 0;">7 characters</div><div style="position:absolute;left:91.20000000000005px;top:327px;font-size:12px;line-height:12px;color:#000;font-weight:normal;white-space:nowrap;transform:scaleX(0.87);transform-origin:0 0;">Password must meet complexity</div><div style="position:absolute;left:262.20000000000005px;top:327px;font-size:12px;line-height:12px;color:#000;font-weight:normal;white-space:nowrap;transform:scaleX(0.87);transform-origin:0 0;">Enabled</div><div style="position:absolute;left:91.20000000000005px;top:344px;font-size:12px;line-height:12px;color:#000;font-weight:normal;white-space:nowrap;transform:scaleX(0.87);transform-origin:0 0;">requirements</div><div style="position:absolute;left:91.20000000000005px;top:366px;font-size:12px;line-height:12px;color:#000;font-weight:normal;white-space:nowrap;transform:scaleX(0.87);transform-origin:0 0;">Store passwords using reversible</div><div style="position:absolute;left:262.20000000000005px;top:366px;font-size:12px;line-height:12px;color:#000;font-weight:normal;white-space:nowrap;transform:scaleX(0.87);transform-origin:0 0;">Disabled</div><div style="position:absolute;left:91.20000000000005px;top:383px;font-size:12px;line-height:12px;color:#000;font-weight:normal;white-space:nowrap;transform:scaleX(0.87);transform-origin:0 0;">encryption</div><div style="position:absolute;left:10px;top:0px;width:1px;height:555px;background:#707070;"></div><div style="position:absolute;left:433px;top:0px;width:1px;height:555px;background:#8f8f8f;"></div><div style="position:absolute;left:442px;top:0px;width:18px;height:555px;background:#f0f0f0;"></div><div style="position:absolute;left:443px;top:143px;width:15px;height:355px;background:#cdcdcd;"></div><svg style="position:absolute;left:445px;top:19px" width="12" height="10" viewBox="0 0 12 10"><path d="M0.2 9 V5 L5.5 0 L10.8 5 V9 L5.5 4 Z" fill="#5f5f5f"/></svg><svg style="position:absolute;left:445px;top:528px" width="12" height="10" viewBox="0 0 12 10"><path d="M0.2 0 V4 L5.5 9 L10.8 4 V0 L5.5 5 Z" fill="#5f5f5f"/></svg><div style="position:absolute;left:0px;top:0px;width:460px;height:1px;background:#a0a0a0;"></div><div style="position:absolute;left:0px;top:0px;width:1px;height:555px;background:#a0a0a0;"></div><div style="position:absolute;left:1px;top:1px;width:459px;height:1px;background:#696969;"></div><div style="position:absolute;left:1px;top:1px;width:1px;height:554px;background:#696969;"></div></div><div style="position:absolute;left:451px;top:279px;width:481px;height:281px;box-sizing:border-box;border:3px solid #00ffff;border-radius:2px;box-shadow:1px 2px 3px rgba(0,0,0,0.4), inset 2px 2px 4px rgba(0,0,0,0.32)"></div><svg style="position:absolute;left:868px;top:569px;" width="22" height="26" viewBox="0 0 22 26"><path d="M6.5 1.5 a1.7 1.7 0 0 1 3.4 0 v8 a1.7 1.7 0 0 1 3.2 0 v1 a1.7 1.7 0 0 1 3.2 0 v1 a1.7 1.7 0 0 1 3.2 0.5 v6 c0 3 -2 6 -5 6 h-4 c-2 0 -3 -1 -4 -2.5 l-4.5 -6.5 a1.6 1.6 0 0 1 2.6 -1.8 l2 2.3 Z" fill="#fff" stroke="#000" stroke-width="1"/><path d="M9.9 9.5 v4 M13.1 10.5 v3 M16.3 11.5 v2.5" stroke="#000" stroke-width="0.8"/></svg><div style="position:absolute;left:0px;top:728px;width:1024px;height:40px;background:linear-gradient(90deg,#041a27 0%,#02131f 50%,#010e1b 100%);"></div><svg style="position:absolute;left:16px;top:740px;" width="17" height="17" viewBox="0 0 17 17"><path d="M0 1.8 L6.3 0.9 V7 H0 Z M7.3 0.8 L16 0 V7 H7.3 Z M0 8 H6.3 V14.3 L0 13.4 Z M7.3 8 H16 V16 L7.3 15.1 Z" fill="#fff"/></svg><div style="position:absolute;left:48px;top:728px;width:320px;height:40px;background:#f0f0f0;"></div><div style="position:absolute;left:48px;top:728px;width:320px;height:1px;background:#c6c6c6;"></div><div style="position:absolute;left:48px;top:729px;width:1px;height:39px;background:#f8f8f8;"></div><svg style="position:absolute;left:59px;top:738px;" width="20" height="20" viewBox="0 0 20 20"><circle cx="12" cy="7.5" r="5.3" fill="none" stroke="#222" stroke-width="1.3"/><path d="M8 12 L2 18.5" stroke="#222" stroke-width="1.5"/></svg><div style="position:absolute;left:88.4px;top:742.00px;font-size:14px;line-height:14px;color:#333;font-weight:normal;white-space:nowrap;letter-spacing:0.17px;">Type here to search</div><svg style="position:absolute;left:383px;top:739px;" width="18" height="17" viewBox="0 0 18 17"><path d="M1.5 0.5 v2.5 h11 v-2.5" fill="none" stroke="#fff" stroke-width="1.1"/><rect x="1.5" y="5.5" width="11" height="7" fill="none" stroke="#fff" stroke-width="1.1"/><path d="M1.5 16.5 v-2.5 h11 v2.5" fill="none" stroke="#fff" stroke-width="1.1"/><rect x="15" y="0.5" width="1.1" height="16" fill="#fff"/><rect x="14.5" y="5" width="2.5" height="2.5" fill="#fff"/></svg><svg style="position:absolute;left:431px;top:735px;" width="25" height="25" viewBox="0 0 25 25"><defs><linearGradient id="eg1" x1="0" y1="0" x2="1" y2="0.6"><stop offset="0" stop-color="#2fb4f0"/><stop offset="0.55" stop-color="#2ec0c8"/><stop offset="1" stop-color="#64e06a"/></linearGradient><linearGradient id="eg2" x1="0" y1="0" x2="0.3" y2="1"><stop offset="0" stop-color="#2a98e8"/><stop offset="1" stop-color="#1260b8"/></linearGradient></defs><circle cx="12.2" cy="12.2" r="12" fill="url(#eg2)"/><path d="M0.6 10.5 C1.8 4.5 6.5 0.2 12.2 0.2 C19 0.2 24.2 5.2 24.2 11.5 C24.2 15.2 21.5 17.2 18.5 17.2 C15.3 17.2 13.8 15.4 13.8 13.4 C13.8 11 16 10.2 16 8.4 C16 6.2 13.2 4.8 10.2 4.8 C6 4.8 2.4 7.2 0.6 10.5 Z" fill="url(#eg1)"/><circle cx="11.5" cy="13" r="3" fill="#02101d"/><path d="M24.2 14.5 C23 17.8 20.5 19.3 17.5 19.3 C19.5 20.5 22 19.5 23.6 17.2 Z" fill="#02101d"/></svg><svg style="position:absolute;left:481px;top:739px;" width="22" height="19" viewBox="0 0 22 19"><path d="M0 0 h8 l1.5 2 H22 V17 H0 Z" fill="#ffc83d"/><rect x="0" y="0" width="8" height="2" fill="#e8a200"/><rect x="0" y="2" width="22" height="15" fill="#ffd35c"/><rect x="4" y="10" width="14" height="9" fill="#3a90e6"/><rect x="7.5" y="13" width="7" height="4" fill="#ffd35c"/></svg><svg style="position:absolute;left:528px;top:735px;" width="27" height="27" viewBox="0 0 27 27"><rect x="1.2" y="1.2" width="11.5" height="21" fill="#1e88e0" stroke="#fff" stroke-width="1.2"/><rect x="1.5" y="7" width="11" height="1" fill="#fff"/><rect x="13" y="12" width="5" height="2.5" fill="none" stroke="#fff" stroke-width="1"/><rect x="5.2" y="14.2" width="20" height="10.5" rx="1" fill="#8a9aa8" stroke="#fff" stroke-width="1.2"/><path d="M7 18.5 h16" stroke="#fff" stroke-width="1.2"/></svg><div style="position:absolute;left:521px;top:766px;width:40px;height:2px;background:#76b9ed;"></div><div style="position:absolute;left:566px;top:728px;width:48px;height:40px;background:#323e48;"></div><svg style="position:absolute;left:579px;top:735px;" width="25" height="26" viewBox="0 0 25 26"><path d="M4.5 1 h17 a1.6 1.6 0 0 1 0 3.2 h-1.2 v15 h-15.8 Z" fill="#fbf3d2" stroke="#d8c890" stroke-width="0.8"/><circle cx="21.5" cy="2.6" r="1.4" fill="#e0c060"/><rect x="7" y="6" width="11" height="1" fill="#b8b098"/><rect x="7" y="9" width="11" height="1" fill="#b8b098"/><rect x="7" y="12" width="11" height="1" fill="#b8b098"/><path d="M2 18.5 h12 v4.5 h-12 a2.25 2.25 0 0 1 0 -4.5Z" fill="#f2dfa0" stroke="#d8b860" stroke-width="0.8"/><path d="M10 16 l12 0 l2.5 3 v6 l-12 0 l-2.5 -3 Z" fill="#9aa6b0" stroke="#6f7a84" stroke-width="0.8"/><path d="M14 16 a3 2 0 0 1 6 0" fill="none" stroke="#444" stroke-width="1"/><rect x="11" y="19" width="12" height="1" fill="#cfd6dc"/></svg><div style="position:absolute;left:566px;top:766px;width:48px;height:2px;background:#76b9ed;"></div><svg style="position:absolute;left:828px;top:741px;" width="18" height="14" viewBox="0 0 18 14"><rect x="1" y="1" width="1" height="2.5" fill="#fff"/><rect x="3" y="1" width="1" height="2.5" fill="#fff"/><path d="M0.5 3.5 v2.5 a2 2 0 0 0 4 0 v-2.5 Z" fill="none" stroke="#fff" stroke-width="1"/><rect x="2" y="8" width="1" height="4" fill="#fff"/><rect x="4.5" y="2.5" width="10.5" height="9" fill="none" stroke="#fff" stroke-width="1"/><rect x="6" y="5" width="7.5" height="5" fill="#fff"/><rect x="15" y="5" width="1.5" height="3.5" fill="#fff"/></svg><svg style="position:absolute;left:851px;top:741px;" width="18" height="15" viewBox="0 0 18 15"><rect x="1.5" y="1.5" width="15.5" height="9.5" fill="none" stroke="#fff" stroke-width="1"/><rect x="9" y="11" width="1" height="2" fill="#fff"/><rect x="5.5" y="13" width="8" height="1" fill="#fff"/><rect x="0.5" y="0.5" width="4.5" height="5" fill="#02131f" stroke="#fff" stroke-width="1"/><path d="M1.8 2.3 L2.75 3.6 L3.7 2.3" fill="none" stroke="#fff" stroke-width="0.8"/><rect x="2.25" y="5.5" width="1" height="8.5" fill="#fff"/></svg><svg style="position:absolute;left:875px;top:741px;" width="19" height="16" viewBox="0 0 19 16"><path d="M1.5 4.5 h2 l3.5 -3.5 v13 l-3.5 -3.5 h-2 Z" fill="none" stroke="#fff" stroke-width="1" stroke-linejoin="round"/><circle cx="12.7" cy="10.4" r="4.6" fill="#e81123"/><path d="M10.9 8.6 L14.5 12.2 M14.5 8.6 L10.9 12.2" stroke="#fff" stroke-width="1.1"/></svg><div style="position:absolute;left:920.6px;top:733.00px;font-size:12px;line-height:12px;color:#fff;font-weight:normal;white-space:nowrap;transform:scaleX(0.875);transform-origin:0 0;">18:46</div><div style="position:absolute;left:901.7px;top:751.00px;font-size:12px;line-height:12px;color:#fff;font-weight:normal;white-space:nowrap;transform:scaleX(0.895);transform-origin:0 0;">2025. 03. 21.</div><svg style="position:absolute;left:982px;top:738px;" width="26" height="28" viewBox="0 0 26 28"><path d="M1 2 h16 v13 h-6 l-3 3 v-3 h-7 Z" fill="#fff"/><rect x="4" y="5" width="10" height="1" fill="#02131f"/><rect x="4" y="8" width="10" height="1" fill="#02131f"/><rect x="4" y="11" width="6" height="1" fill="#02131f"/><circle cx="16.5" cy="17.6" r="7.6" fill="#26292f" stroke="#8a8a8a" stroke-width="1"/><path d="M14.3 15.8 L17.2 13.5 H18.3 V21.2 H16.9 V15.6 L14.9 17 Z" fill="#fff"/></svg><div style="position:absolute;left:1019px;top:728px;width:1px;height:40px;background:#5a6168;"></div></body></html>
